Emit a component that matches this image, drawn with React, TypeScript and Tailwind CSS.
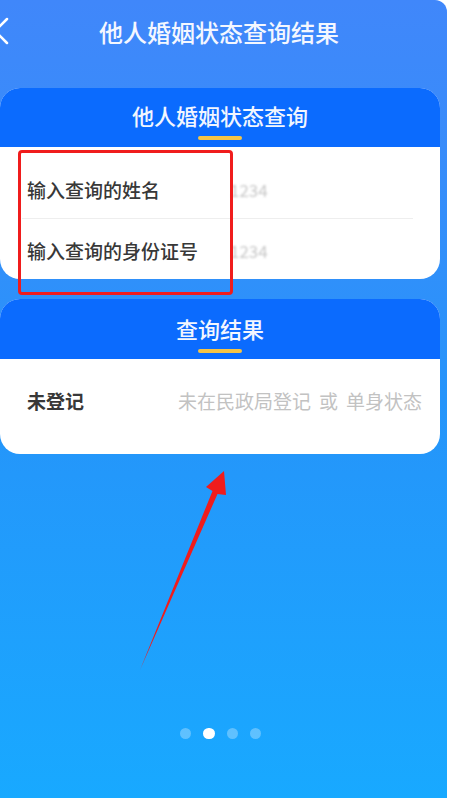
import React from 'react'

const font = { fontFamily: '"Noto Sans CJK SC", "Noto Sans", sans-serif' }

function CardHeader({ title, tall }: { title: string; tall?: boolean }) {
  return (
    <div className={tall ? 'flex h-[60px] flex-col items-center bg-[#0b6bfe] pt-[14px]' : 'flex h-[59px] flex-col items-center bg-[#0b6bfe] pt-[12px]'}>
      <div className="text-[22px] font-medium leading-[30px] text-[#f2f6ff]">{title}</div>
      <div className="mt-[6px] h-[4px] w-[44px] rounded-full bg-[#f6c445]" />
    </div>
  )
}

export default function App() {
  return (
    <div className="min-h-screen bg-white" style={font}>
      <div className="relative flex h-[798px] w-[447px] flex-col overflow-hidden rounded-tr-[12px] bg-gradient-to-b from-[#4087fa] via-[#2594fa] to-[#18a9ff]">
        {/* top bar */}
        <div className="relative flex h-[64px] items-center justify-center pr-[9px]">
          <svg className="absolute left-0 top-[16px] overflow-visible" width="10" height="30" viewBox="0 0 10 30">
            <polyline points="7,3 -5,15 7,27" fill="none" stroke="#ffffff" strokeWidth="2.5" strokeLinecap="round" strokeLinejoin="round" />
          </svg>
          <h1 className="text-[24px] font-medium leading-[32px] text-[#f4f7ff]">他人婚姻状态查询结果</h1>
        </div>

        {/* query card */}
        <div className="mt-[24px] w-[440px] overflow-hidden rounded-[20px] bg-white">
          <CardHeader title="他人婚姻状态查询" />
          <div className="px-[22px]">
            <div className="flex items-center pb-[15px] pl-[5px] pt-[30px] text-[19px] leading-[26px]">
              <span className="w-[203px] font-medium text-[#383838]">输入查询的姓名</span>
              <span className="text-[17px] text-[#c8c8c8] blur-[1px]">1234</span>
            </div>
            <div className="mr-[5px] h-px bg-[#eeeeee]" />
            <div className="flex items-center pb-[15px] pl-[5px] pt-[19px] text-[19px] leading-[26px]">
              <span className="w-[203px] font-medium text-[#383838]">输入查询的身份证号</span>
              <span className="text-[17px] text-[#c8c8c8] blur-[1px]">1234</span>
            </div>
          </div>
        </div>

        {/* result card */}
        <div className="mt-[20px] w-[440px] overflow-hidden rounded-[20px] bg-white">
          <CardHeader title="查询结果" tall />
          <div className="flex items-center justify-between pb-[40px] pl-[27px] pr-[18px] pt-[29px] text-[19px] leading-[26px]">
            <span className="font-semibold text-[#383838]">未登记</span>
            <span className="text-[#c2c2c2]">
              未在民政局登记<span className="mx-[8px]">或</span>单身状态
            </span>
          </div>
        </div>

        {/* pager dots */}
        <div className="mt-auto flex w-[440px] justify-center gap-[12px] pb-[59px]">
          <span className="h-[11px] w-[11px] rounded-full bg-white/30" />
          <span className="h-[11px] w-[12px] rounded-full bg-white" />
          <span className="h-[11px] w-[11px] rounded-full bg-white/30" />
          <span className="h-[11px] w-[11px] rounded-full bg-white/30" />
        </div>

        {/* annotation: red box */}
        <div className="pointer-events-none absolute left-[18px] top-[150px] h-[145px] w-[215px] rounded-[4px] border-[3px] border-[#f01c1c]" />

        {/* annotation: red arrow */}
        <svg className="pointer-events-none absolute left-0 top-0" width="447" height="798" viewBox="0 0 447 798">
          <polygon points="140,670 212.5,491 206,487 224,471 226,495 217.5,494" fill="#f01c1c" />
        </svg>
      </div>
    </div>
  )
}
